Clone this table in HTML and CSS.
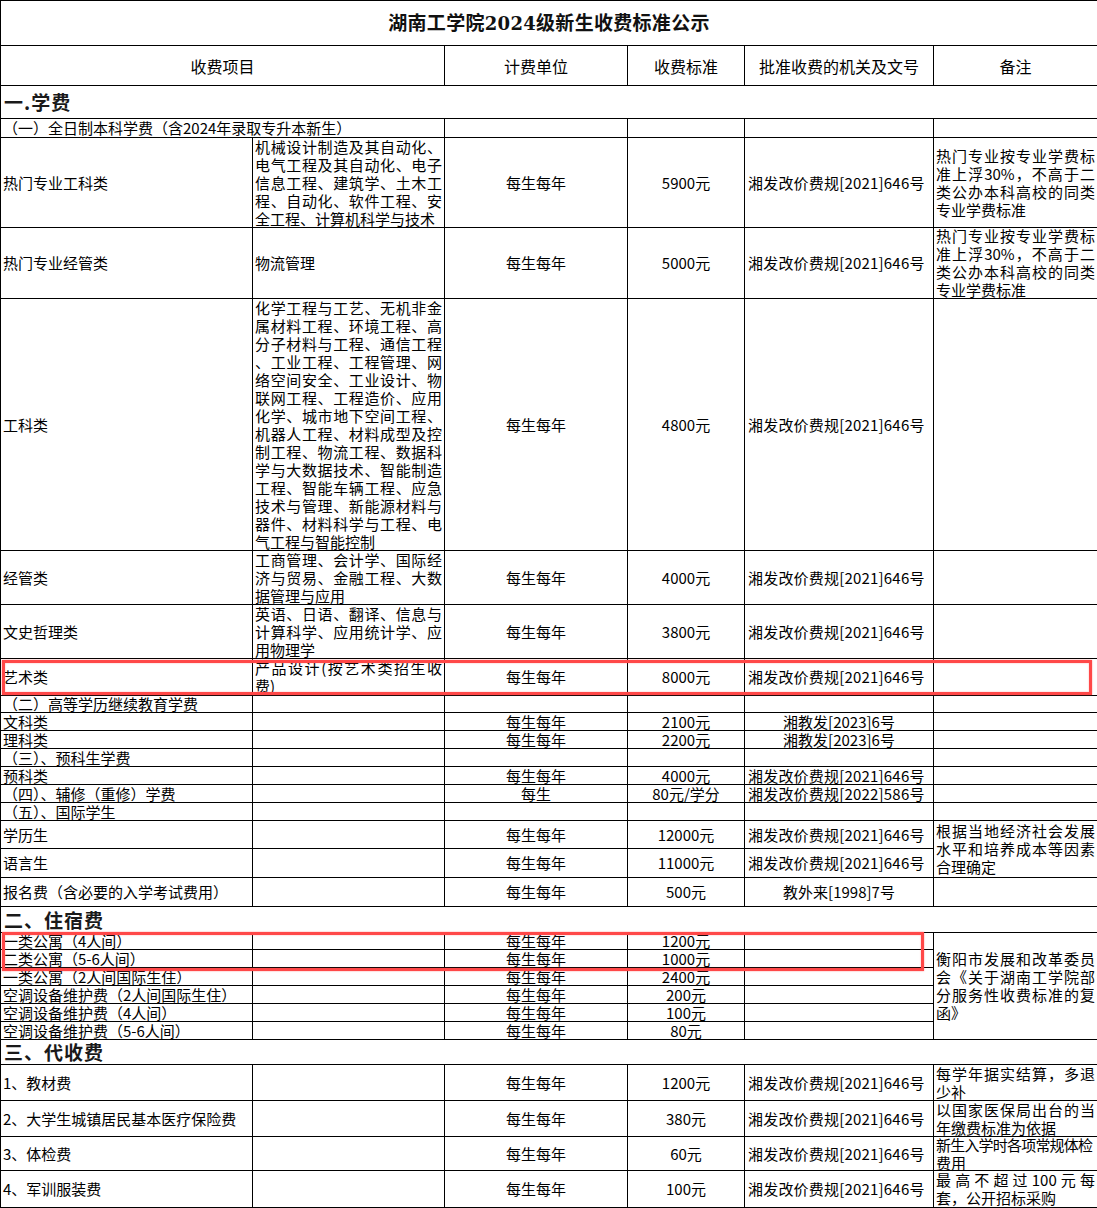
FILE: index.html
```html
<!DOCTYPE html>
<html lang="zh-CN">
<head>
<meta charset="utf-8">
<title>湖南工学院2024级新生收费标准公示</title>
<link rel="stylesheet" href="styles.css">
</head>
<body>
<div class="sheet">
<table class="fees">
<colgroup><col class="c1"><col class="c2"><col class="c3"><col class="c4"><col class="c5"><col class="c6"></colgroup>
<tbody>
<tr class="h45"><td colspan="6" class="title">湖南工学院<span class="tnum">2024</span>级新生收费标准公示</td></tr>
<tr class="h40 head"><td colspan="2">收费项目</td><td>计费单位</td><td>收费标准</td><td>批准收费的机关及文号</td><td>备注</td></tr>
<tr class="h33"><td colspan="6" class="sec">一.学费</td></tr>
<tr class="h19"><td colspan="2" class="l">（一）全日制本科学费（含2024年录取专升本新生）</td><td></td><td></td><td></td><td></td></tr>
<tr class="h90">
<td class="l">热门专业工科类</td>
<td class="l"><div class="ml"><div class="jl">机械设计制造及其自动化、</div><div class="jl">电气工程及其自动化、电子</div><div class="jl">信息工程、建筑学、土木工</div><div class="jl">程、自动化、软件工程、安</div><div>全工程、计算机科学与技术</div></div></td>
<td>每生每年</td><td>5900元</td><td class="doc">湘发改价费规[2021]646号</td>
<td class="l"><div class="ml"><div class="jl">热门专业按专业学费标</div><div class="jl">准上浮30%，不高于二</div><div class="jl">类公办本科高校的同类</div><div>专业学费标准</div></div></td>
</tr>
<tr class="h71">
<td class="l">热门专业经管类</td>
<td class="l">物流管理</td>
<td>每生每年</td><td>5000元</td><td class="doc">湘发改价费规[2021]646号</td>
<td class="l"><div class="ml"><div class="jl">热门专业按专业学费标</div><div class="jl">准上浮30%，不高于二</div><div class="jl">类公办本科高校的同类</div><div>专业学费标准</div></div></td>
</tr>
<tr class="h252">
<td class="l">工科类</td>
<td class="l"><div class="ml"><div class="jl">化学工程与工艺、无机非金</div><div class="jl">属材料工程、环境工程、高</div><div class="jl">分子材料与工程、通信工程</div><div class="jl">、工业工程、工程管理、网</div><div class="jl">络空间安全、工业设计、物</div><div class="jl">联网工程、工程造价、应用</div><div class="jl">化学、城市地下空间工程、</div><div class="jl">机器人工程、材料成型及控</div><div class="jl">制工程、物流工程、数据科</div><div class="jl">学与大数据技术、智能制造</div><div class="jl">工程、智能车辆工程、应急</div><div class="jl">技术与管理、新能源材料与</div><div class="jl">器件、材料科学与工程、电</div><div>气工程与智能控制</div></div></td>
<td>每生每年</td><td>4800元</td><td class="doc">湘发改价费规[2021]646号</td><td></td>
</tr>
<tr class="h54">
<td class="l">经管类</td>
<td class="l"><div class="ml"><div class="jl">工商管理、会计学、国际经</div><div class="jl">济与贸易、金融工程、大数</div><div>据管理与应用</div></div></td>
<td>每生每年</td><td>4000元</td><td class="doc">湘发改价费规[2021]646号</td><td></td>
</tr>
<tr class="h54">
<td class="l">文史哲理类</td>
<td class="l"><div class="ml"><div class="jl">英语、日语、翻译、信息与</div><div class="jl">计算科学、应用统计学、应</div><div>用物理学</div></div></td>
<td>每生每年</td><td>3800元</td><td class="doc">湘发改价费规[2021]646号</td><td></td>
</tr>
<tr class="h37">
<td class="l">艺术类</td>
<td class="l"><div class="ml"><div class="jl">产品设计(按艺术类招生收</div><div>费)</div></div></td>
<td>每生每年</td><td>8000元</td><td class="doc">湘发改价费规[2021]646号</td><td></td>
</tr>
<tr class="h17"><td class="l">（二）高等学历继续教育学费</td><td></td><td></td><td></td><td></td><td></td></tr>
<tr class="h18"><td class="l">文科类</td><td></td><td>每生每年</td><td>2100元</td><td>湘教发[2023]6号</td><td></td></tr>
<tr class="h18"><td class="l">理科类</td><td></td><td>每生每年</td><td>2200元</td><td>湘教发[2023]6号</td><td></td></tr>
<tr class="h18"><td class="l">（三）、预科生学费</td><td></td><td></td><td></td><td></td><td></td></tr>
<tr class="h18"><td class="l">预科类</td><td></td><td>每生每年</td><td>4000元</td><td class="doc">湘发改价费规[2021]646号</td><td></td></tr>
<tr class="h18"><td class="l">（四）、辅修（重修）学费</td><td></td><td>每生</td><td>80元/学分</td><td class="doc">湘发改价费规[2022]586号</td><td></td></tr>
<tr class="h18"><td class="l">（五）、国际学生</td><td></td><td></td><td></td><td></td><td></td></tr>
<tr class="h28">
<td class="l">学历生</td><td></td><td>每生每年</td><td>12000元</td><td class="doc">湘发改价费规[2021]646号</td>
<td rowspan="2" class="l"><div class="ml"><div class="jl">根据当地经济社会发展</div><div class="jl">水平和培养成本等因素</div><div>合理确定</div></div></td>
</tr>
<tr class="h29"><td class="l">语言生</td><td></td><td>每生每年</td><td>11000元</td><td class="doc">湘发改价费规[2021]646号</td></tr>
<tr class="h29"><td class="l">报名费（含必要的入学考试费用）</td><td></td><td>每生每年</td><td>500元</td><td>教外来[1998]7号</td><td></td></tr>
<tr class="h26"><td colspan="6" class="sec">二、住宿费</td></tr>
<tr class="h17">
<td class="l">一类公寓（4人间）</td><td></td><td>每生每年</td><td>1200元</td><td></td>
<td rowspan="6" class="l"><div class="ml"><div class="jl">衡阳市发展和改革委员</div><div class="jl">会《关于湖南工学院部</div><div class="jl">分服务性收费标准的复</div><div>函》</div></div></td>
</tr>
<tr class="h18"><td class="l">二类公寓（5-6人间）</td><td></td><td>每生每年</td><td>1000元</td><td></td></tr>
<tr class="h18"><td class="l">一类公寓（2人间国际生住）</td><td></td><td>每生每年</td><td>2400元</td><td></td></tr>
<tr class="h18"><td class="l">空调设备维护费（2人间国际生住）</td><td></td><td>每生每年</td><td>200元</td><td></td></tr>
<tr class="h18"><td class="l">空调设备维护费（4人间）</td><td></td><td>每生每年</td><td>100元</td><td></td></tr>
<tr class="h18"><td class="l">空调设备维护费（5-6人间）</td><td></td><td>每生每年</td><td>80元</td><td></td></tr>
<tr class="h25"><td colspan="6" class="sec">三、代收费</td></tr>
<tr class="h36">
<td class="l">1、教材费</td><td></td><td>每生每年</td><td>1200元</td><td class="doc">湘发改价费规[2021]646号</td>
<td class="l"><div class="ml"><div class="jl">每学年据实结算，多退</div><div>少补</div></div></td>
</tr>
<tr class="h36">
<td class="l">2、大学生城镇居民基本医疗保险费</td><td></td><td>每生每年</td><td>380元</td><td class="doc">湘发改价费规[2021]646号</td>
<td class="l"><div class="ml"><div class="jl">以国家医保局出台的当</div><div>年缴费标准为依据</div></div></td>
</tr>
<tr class="h34">
<td class="l">3、体检费</td><td></td><td>每生每年</td><td>60元</td><td class="doc">湘发改价费规[2021]646号</td>
<td class="l"><div class="ml ml2"><div class="tight">新生入学时各项常规体检</div><div>费用</div></div></td>
</tr>
<tr class="h37">
<td class="l">4、军训服装费</td><td></td><td>每生每年</td><td>100元</td><td class="doc">湘发改价费规[2021]646号</td>
<td class="l"><div class="ml"><div class="jl">最高不超过100元每</div><div>套，公开招标采购</div></div></td>
</tr>
</tbody>
</table>
<div class="mark mark-art"></div>
<div class="mark mark-dorm"></div>
</div>
</body>
</html>
```

FILE: styles.css
```css
html, body {
  margin: 0;
  padding: 0;
  background: #fff;
}

body {
  font-family: "Noto Sans CJK SC", "Noto Sans", sans-serif;
  color: #000;
}

.sheet {
  position: relative;
  width: 1097px;
}

.fees {
  border-collapse: collapse;
  table-layout: fixed;
  width: 1097px;
  font-size: 15px;
  line-height: 16px;
}

.c1 { width: 252px; }
.c2 { width: 192px; }
.c3 { width: 183px; }
.c4 { width: 117px; }
.c5 { width: 189px; }
.c6 { width: 164px; }

.fees td {
  border: 1px solid #000;
  padding: 0 2px;
  text-align: center;
  vertical-align: middle;
  white-space: nowrap;
  overflow: visible;
}

.fees td.l {
  text-align: left;
}

.fees td.doc {
  text-align: left;
  padding-left: 3px;
  letter-spacing: 0.2px;
}

.h17 { height: 17px; }
.h18 { height: 18px; }
.h19 { height: 19px; }
.h25 { height: 25px; }
.h26 { height: 26px; }
.h28 { height: 28px; }
.h29 { height: 29px; }
.h33 { height: 33px; }
.h34 { height: 34px; }
.h36 { height: 36px; }
.h37 { height: 37px; }
.h40 { height: 40px; }
.h45 { height: 45px; }
.h54 { height: 54px; }
.h71 { height: 71px; }
.h90 { height: 90px; }
.h252 { height: 252px; }

.fees td.title {
  font-size: 19px;
  font-weight: 700;
  color: #111;
  letter-spacing: 0.3px;
}

.tnum {
  font-family: "DejaVu Serif", serif;
  font-size: 18px;
}

.head td {
  font-size: 16px;
}

.fees td.sec {
  text-align: left;
  font-size: 19px;
  line-height: 20px;
  font-weight: 700;
  color: #1a1a1a;
  letter-spacing: 1px;
  padding-left: 3px;
  vertical-align: middle;
}

.ml {
  line-height: 18px;
  margin: -2px 0;
  white-space: normal;
}

.ml2 {
  margin: -3px 0;
}

.jl {
  white-space: nowrap;
  text-align: justify;
  text-align-last: justify;
}

.tight {
  white-space: nowrap;
  letter-spacing: -0.8px;
}

.mark {
  position: absolute;
  box-sizing: border-box;
  border: 3px solid #ff4848;
  box-shadow: 0 0 1.5px rgba(255, 72, 72, 0.6), inset 0 0 1.5px rgba(255, 72, 72, 0.6);
  pointer-events: none;
}

.mark-art {
  left: 2px;
  top: 660px;
  width: 1090px;
  height: 35px;
}

.mark-dorm {
  left: 2px;
  top: 932px;
  width: 922px;
  height: 39px;
}
```
